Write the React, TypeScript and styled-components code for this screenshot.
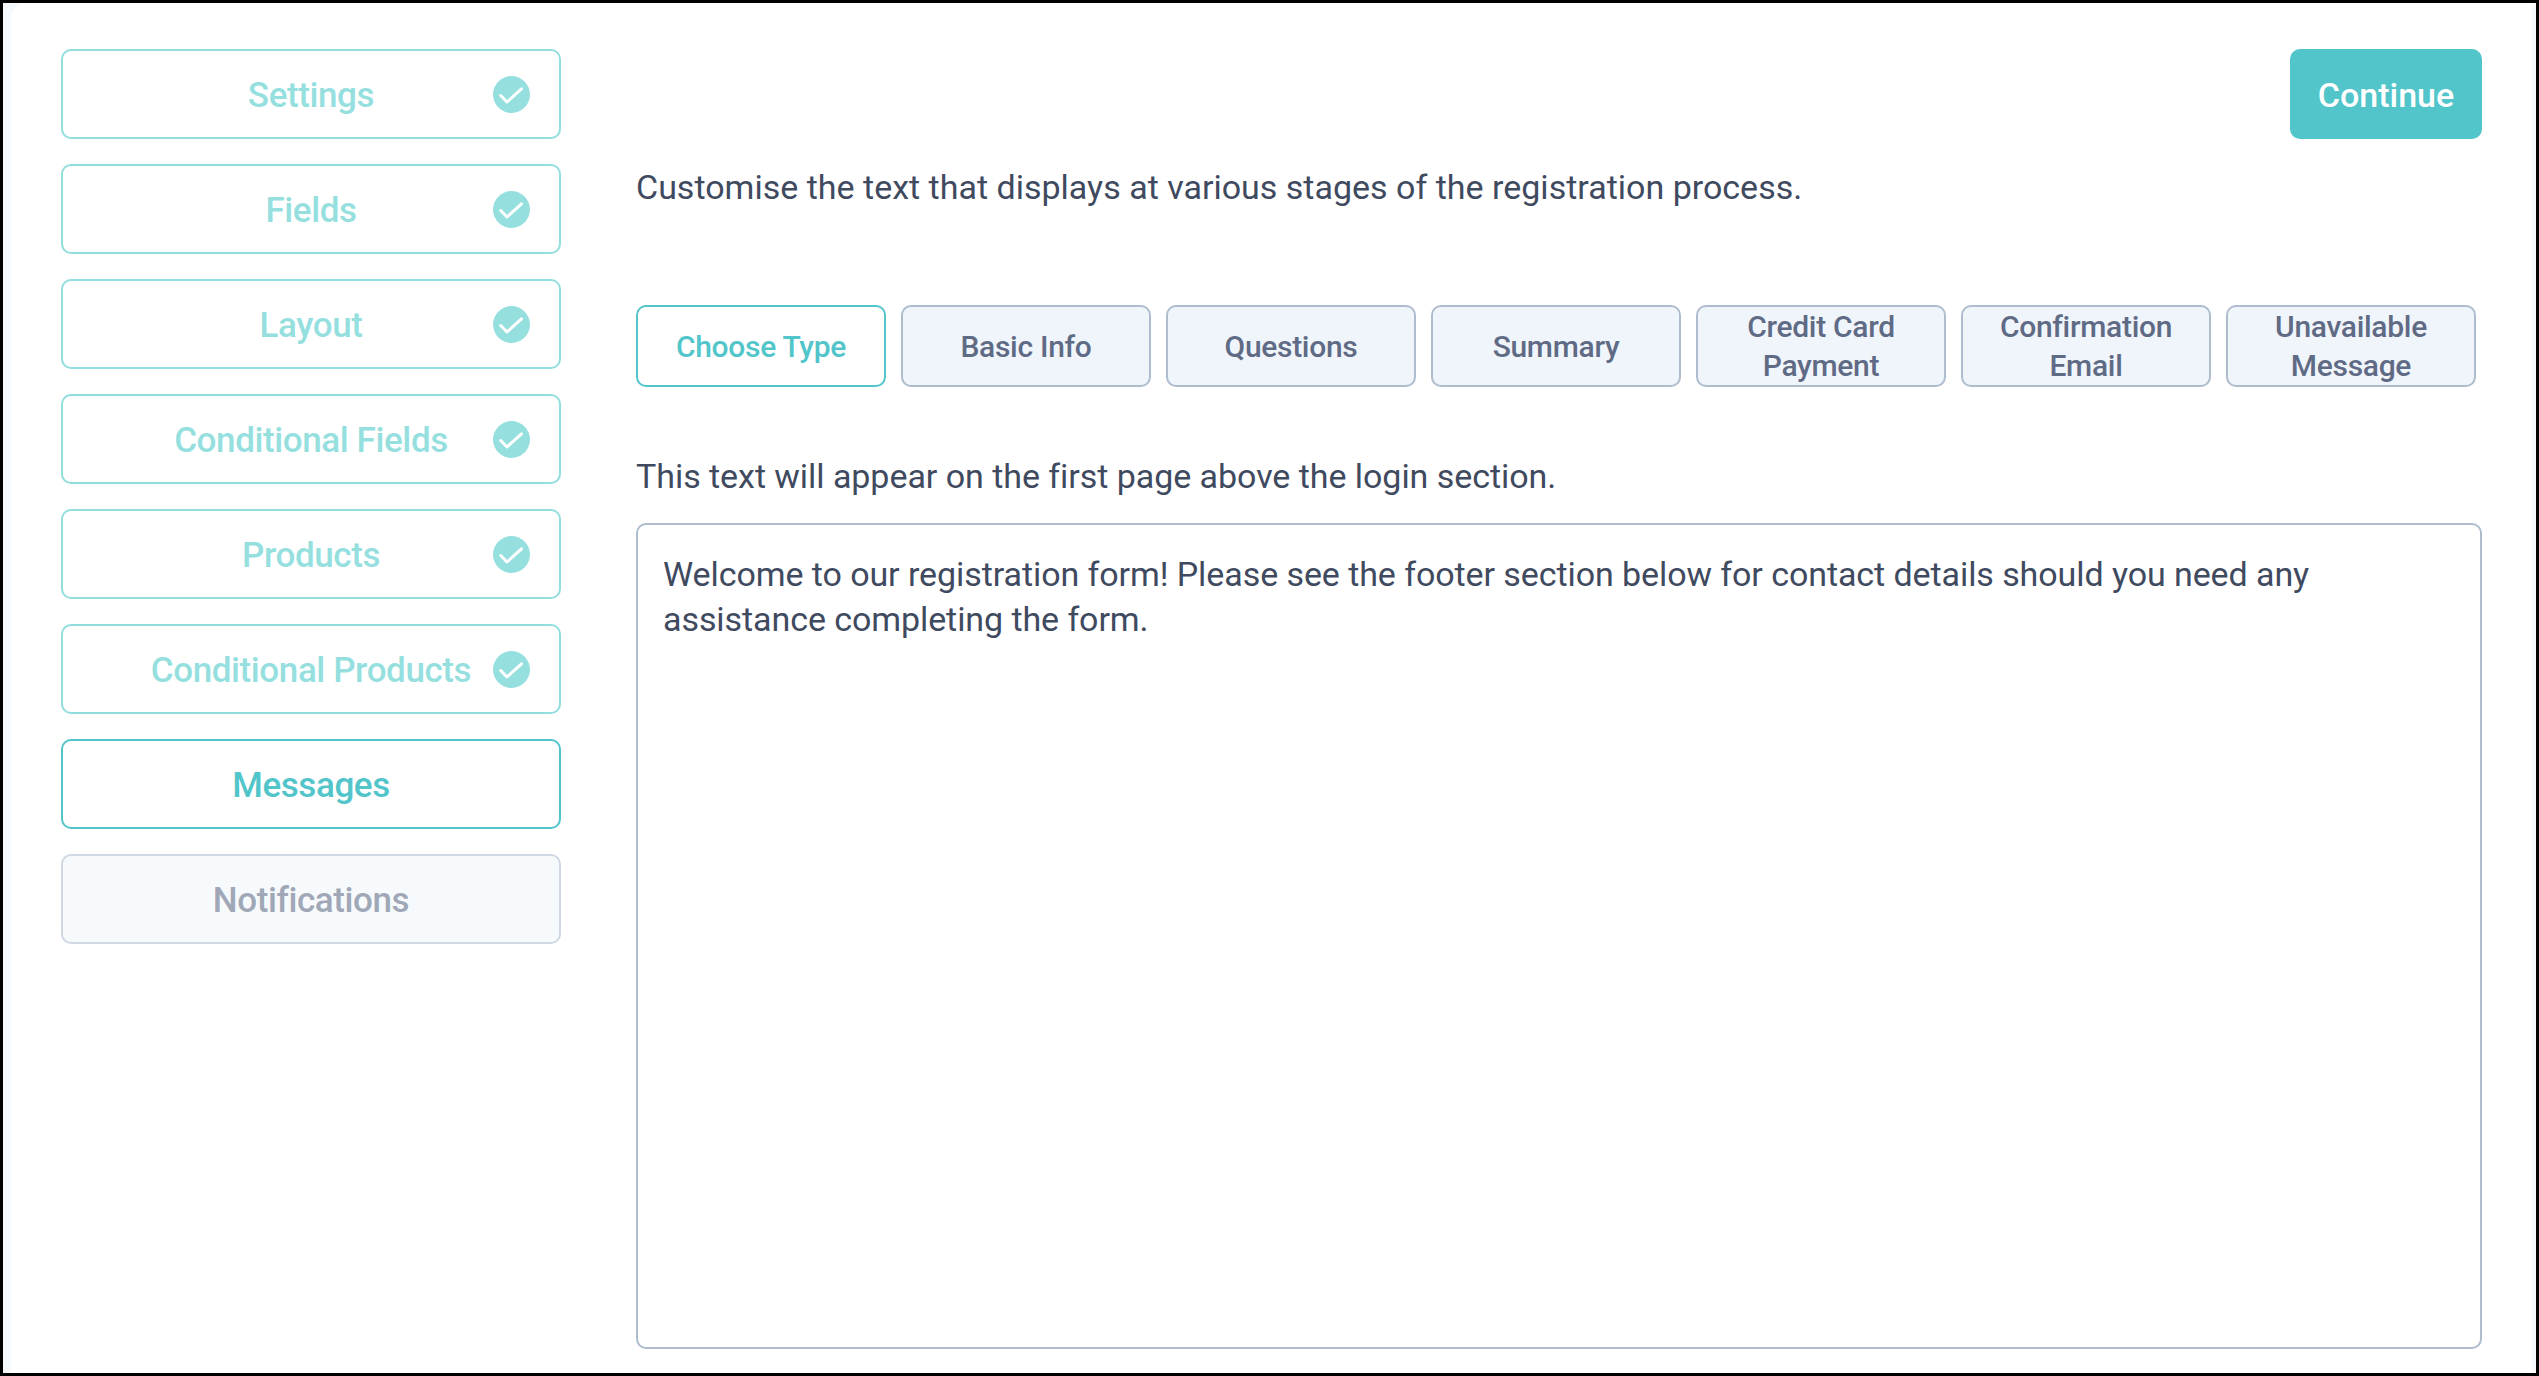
import React from "react";
import styled, { createGlobalStyle } from "styled-components";

const GlobalStyle = createGlobalStyle`
	html, body {
		margin: 0;
		padding: 0;
		background: #000;
	}
	* {
		box-sizing: border-box;
	}
`;

const Frame = styled.div`
	width: 2539px;
	height: 1376px;
	border: 3px solid #000;
	background: #f7fafc;
	padding: 0 4px 0 8px;
	font-family: Roboto, "Liberation Sans", sans-serif;
	overflow: hidden;
`;

const Card = styled.div`
	height: 100%;
	background: #fff;
	border-radius: 16px 0 0 0;
	padding: 46px 50px 24px 50px;
	display: flex;
	gap: 75px;
`;

const Sidebar = styled.div`
	width: 500px;
	flex: none;
	display: flex;
	flex-direction: column;
	gap: 25px;
`;

type StepState = "done" | "active" | "disabled";

const stepColors = {
	done: { border: "#92dddd", text: "#96dfdf", bg: "#fff" },
	active: { border: "#52c5ca", text: "#52c5ca", bg: "#fff" },
	disabled: { border: "#cfd8e3", text: "#a0a8b8", bg: "#f7fafc" },
};

const Step = styled.div<{ $state: StepState }>`
	position: relative;
	height: 90px;
	padding-top: 3px;
	display: flex;
	align-items: center;
	justify-content: center;
	border: 2px solid ${(p) => stepColors[p.$state].border};
	border-radius: 10px;
	background: ${(p) => stepColors[p.$state].bg};
	color: ${(p) => stepColors[p.$state].text};
	font-size: 35px;
	font-weight: 500;
	letter-spacing: -0.4px;
`;

const StepCheck = styled.svg`
	position: absolute;
	right: 29px;
	top: 25px;
	width: 37px;
	height: 37px;
`;

const Main = styled.div`
	flex: 1;
	display: flex;
	flex-direction: column;
`;

const TopBar = styled.div`
	display: flex;
	justify-content: flex-end;
`;

const ContinueButton = styled.button`
	width: 192px;
	height: 90px;
	padding: 2px 0 0;
	border: none;
	border-radius: 10px;
	background: #52c5ca;
	color: #fff;
	font-family: inherit;
	font-size: 34px;
	font-weight: 500;
`;

const Description = styled.p`
	margin: 27px 0 0;
	font-size: 34px;
	line-height: 42px;
	color: #3f4a5f;
`;

const Tabs = styled.div`
	display: flex;
	gap: 15px;
	margin-top: 97px;
`;

const Tab = styled.div<{ $active?: boolean }>`
	width: 250px;
	height: 82px;
	display: flex;
	align-items: center;
	justify-content: center;
	text-align: center;
	border: 2px solid ${(p) => (p.$active ? "#52c5ca" : "#aebccd")};
	border-radius: 10px;
	background: ${(p) => (p.$active ? "#fff" : "#f0f5fc")};
	color: ${(p) => (p.$active ? "#52c5ca" : "#5f6b85")};
	font-size: 30px;
	line-height: 39px;
	letter-spacing: -0.3px;
	font-weight: 500;
`;

const FieldLabel = styled.label`
	display: block;
	margin-top: 68px;
	font-size: 34px;
	line-height: 42px;
	letter-spacing: -0.05px;
	color: #3f4a5f;
`;

const MessageBox = styled.textarea`
	display: block;
	flex: 1;
	width: 100%;
	margin: 26px 0 0;
	padding: 27px 25px;
	border: 2px solid #aebccd;
	border-radius: 10px;
	background: #fff;
	color: #3f4a5f;
	font-family: inherit;
	font-size: 34px;
	line-height: 45px;
	letter-spacing: -0.08px;
	resize: none;
	outline: none;
`;

const steps: { label: string; state: StepState }[] = [
	{ label: "Settings", state: "done" },
	{ label: "Fields", state: "done" },
	{ label: "Layout", state: "done" },
	{ label: "Conditional Fields", state: "done" },
	{ label: "Products", state: "done" },
	{ label: "Conditional Products", state: "done" },
	{ label: "Messages", state: "active" },
	{ label: "Notifications", state: "disabled" },
];

const tabs = [
	["Choose Type"],
	["Basic Info"],
	["Questions"],
	["Summary"],
	["Credit Card", "Payment"],
	["Confirmation", "Email"],
	["Unavailable", "Message"],
];

function App() {
	return (
		<Frame>
			<GlobalStyle />
			<Card>
				<Sidebar>
					{steps.map((step) => (
						<Step key={step.label} $state={step.state}>
							{step.label}
							{step.state === "done" && (
								<StepCheck viewBox="0 0 37 37">
									<circle cx="18.5" cy="18.5" r="18.5" fill="#96dfdf" />
									<path
										d="M7.7 19.5L14 26L28.5 12.8"
										fill="none"
										stroke="#fff"
										strokeWidth="3"
										strokeLinecap="round"
										strokeLinejoin="round"
									/>
								</StepCheck>
							)}
						</Step>
					))}
				</Sidebar>
				<Main>
					<TopBar>
						<ContinueButton>Continue</ContinueButton>
					</TopBar>
					<Description>
						Customise the text that displays at various stages of the registration process.
					</Description>
					<Tabs>
						{tabs.map((lines, i) => (
							<Tab key={lines[0]} $active={i === 0}>
								<span>
									{lines.map((line, j) => (
										<React.Fragment key={line}>
											{j > 0 && <br />}
											{line}
										</React.Fragment>
									))}
								</span>
							</Tab>
						))}
					</Tabs>
					<FieldLabel>This text will appear on the first page above the login section.</FieldLabel>
					<MessageBox
						readOnly
						defaultValue="Welcome to our registration form! Please see the footer section below for contact details should you need any assistance completing the form."
					/>
				</Main>
			</Card>
		</Frame>
	);
}

export default App;
